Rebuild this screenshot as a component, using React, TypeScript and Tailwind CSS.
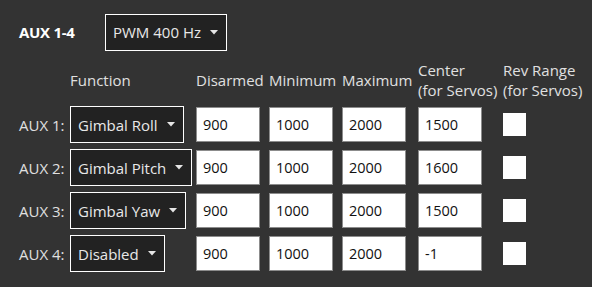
const rows = [
  { label: 'AUX 1:', fn: 'Gimbal Roll', disarmed: '900', min: '1000', max: '2000', center: '1500' },
  { label: 'AUX 2:', fn: 'Gimbal Pitch', disarmed: '900', min: '1000', max: '2000', center: '1600' },
  { label: 'AUX 3:', fn: 'Gimbal Yaw', disarmed: '900', min: '1000', max: '2000', center: '1500' },
  { label: 'AUX 4:', fn: 'Disabled', disarmed: '900', min: '1000', max: '2000', center: '-1' },
];

const Caret = () => (
  <svg width="8" height="5" viewBox="0 0 8 5" className="ml-[9px] shrink-0">
    <path d="M0 0 H8 L4 4.5 Z" fill="#e6e6e6" />
  </svg>
);

const Select = ({ value }: { value: string }) => (
  <div className="inline-flex h-[37px] items-center border border-white bg-[#222222] pl-[7px] pr-[8px] text-[#e8e8e8]">
    <span>{value}</span>
    <Caret />
  </div>
);

const NumInput = ({ value }: { value: string }) => (
  <input
    readOnly
    value={value}
    className="h-[35px] w-[64px] border border-[#8c8c8c] bg-white pl-[6px] text-[14.5px] text-[#111] outline-none"
    style={{ fontFamily: '"Open Sans", sans-serif' }}
  />
);

export default function App() {
  return (
    <div
      className="h-[287px] w-[592px] overflow-hidden bg-[#333333] pl-[19px] pt-[14px] text-[15px] text-[#e0e0e0]"
      style={{ fontFamily: '"Open Sans", sans-serif' }}
    >
      <div className="flex items-center">
        <span className="w-[86px] font-bold tracking-[-0.3px] text-white">AUX 1-4</span>
        <Select value="PWM 400 Hz" />
      </div>

      <div className="mt-[9px] grid grid-cols-[51px_126px_73px_73px_76px_85px_1fr] items-center gap-y-[6px] leading-[20px]">
        <div />
        <div>Function</div>
        <div>Disarmed</div>
        <div>Minimum</div>
        <div>Maximum</div>
        <div>
          Center
          <br />
          (for Servos)
        </div>
        <div>
          Rev Range
          <br />
          (for Servos)
        </div>

        {rows.map((r) => (
          <>
            <div key={r.label + 'l'} className="pr-[6px] text-right whitespace-nowrap">{r.label}</div>
            <div><Select value={r.fn} /></div>
            <div><NumInput value={r.disarmed} /></div>
            <div><NumInput value={r.min} /></div>
            <div><NumInput value={r.max} /></div>
            <div><NumInput value={r.center} /></div>
            <div><div className="h-[23px] w-[23px] bg-white" /></div>
          </>
        ))}
      </div>
    </div>
  );
}
